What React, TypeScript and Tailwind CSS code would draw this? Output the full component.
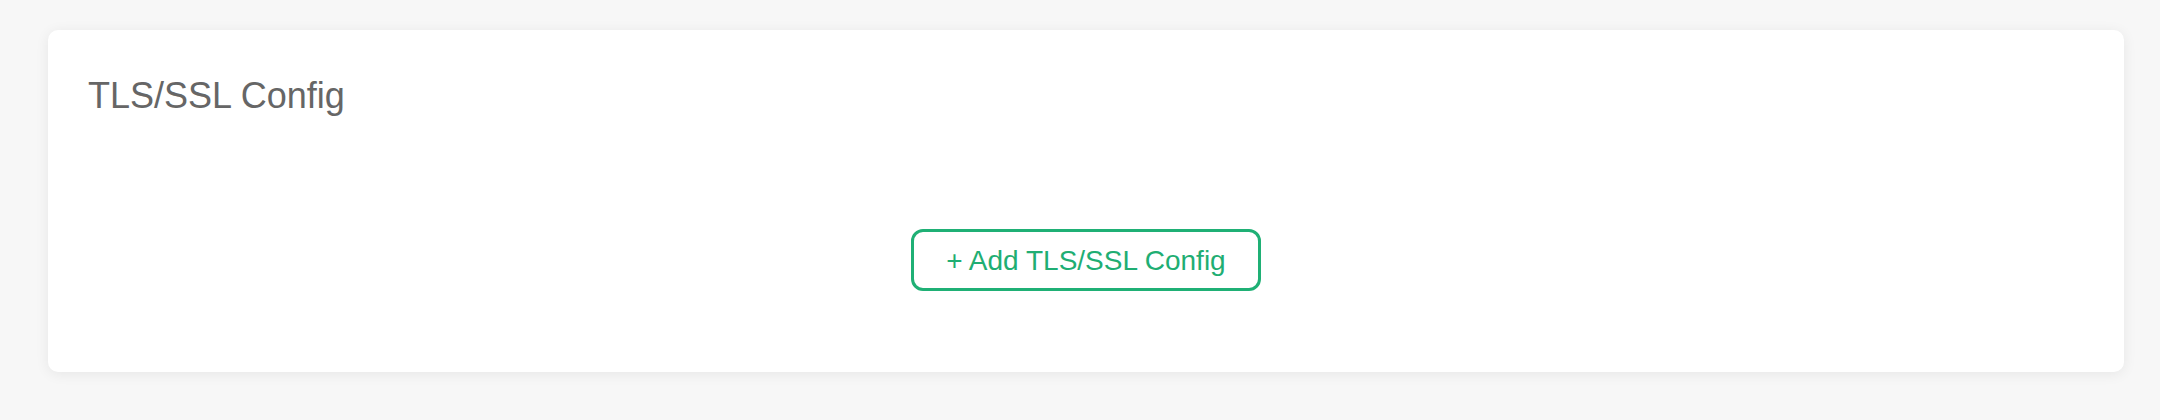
export default function App() {
  return (
    <main
      className="min-h-[420px] bg-[#f7f7f7] pt-[30px] pl-[48px]"
      style={{ fontFamily: '"Liberation Sans", Arial, sans-serif' }}
    >
      <section className="w-[2076px] rounded-[10px] bg-white pt-[48px] px-10 pb-[81px] shadow-[0_2px_14px_rgba(0,0,0,0.07)]">
        <h2 className="text-[36px] leading-none font-normal text-[#666]">TLS/SSL Config</h2>
        <div className="mt-[115px] flex justify-center">
          <button className="flex h-[62px] w-[350px] items-center justify-center rounded-[12px] border-[3px] border-[#1fb075] bg-white pt-[2px] text-[28px] leading-none text-[#1fae73]">
            + Add TLS/SSL Config
          </button>
        </div>
      </section>
    </main>
  );
}
